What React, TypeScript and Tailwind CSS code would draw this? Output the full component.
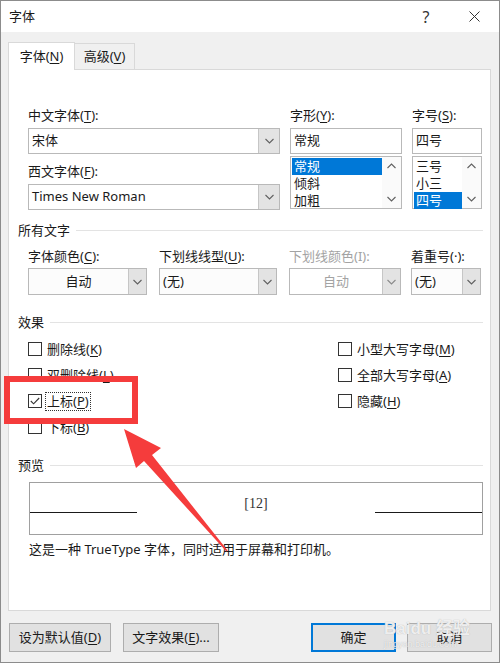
import React from 'react';

// Windows Word "字体" dialog with a red annotation around 上标(P)

const Acc = ({ c }: { c: string }) => <span className="underline underline-offset-[2px]">{c}</span>;

function Chevron({ up = false, color = '#606060' }: { up?: boolean; color?: string }) {
  return (
    <svg width="9" height="6" viewBox="0 0 9 6">
      <polyline
        points={up ? '0.5,5 4.5,1 8.5,5' : '0.5,1 4.5,5 8.5,1'}
        fill="none"
        stroke={color}
        strokeWidth="1.1"
      />
    </svg>
  );
}

function ComboEdit({ value, width }: { value: string; width: string }) {
  return (
    <div className={`${width} h-[26px] flex border border-[#b9b9b9] bg-white`}>
      <div className="flex-1 flex items-center pl-[3px] text-[13px] text-[#1a1a1a]">{value}</div>
      <div className="w-[21px] bg-[#e3e3e3] border-l border-[#c6c6c6] flex items-center justify-center">
        <Chevron />
      </div>
    </div>
  );
}

function DropList({
  value,
  width,
  center = false,
  disabled = false,
}: {
  value: string;
  width: string;
  center?: boolean;
  disabled?: boolean;
}) {
  return (
    <div className={`${width} h-[27px] flex border border-[#b9b9b9] ${disabled ? 'bg-white' : 'bg-[#fcfcfc]'}`}>
      <div
        className={`flex-1 flex items-center text-[13px] ${center ? 'justify-center' : 'pl-[3px]'} ${
          disabled ? 'text-[#a3a3a3]' : 'text-[#1a1a1a]'
        }`}
      >
        {value}
      </div>
      <div className="w-[18px] bg-[#e3e3e3] border-l border-[#c6c6c6] flex items-center justify-center">
        <Chevron color={disabled ? '#8a8a8a' : '#606060'} />
      </div>
    </div>
  );
}

function ListBox({ items, selected, width }: { items: string[]; selected: number; width: string }) {
  return (
    <div className={`${width} h-[53px] flex border border-[#b9b9b9] bg-white`}>
      <div className="flex-1 flex flex-col pt-[1px] pl-[1px]">
        {items.map((it, i) => (
          <div
            key={it}
            className={`h-[17px] flex items-center pl-[2px] text-[13px] ${
              i === selected ? 'bg-[#0078d7] text-white' : 'text-[#1a1a1a]'
            }`}
          >
            {it}
          </div>
        ))}
      </div>
      <div className="w-[19px] flex flex-col items-center justify-between py-[6px] bg-[#fafafa]">
        <Chevron up />
        <Chevron />
      </div>
    </div>
  );
}

function SectionHead({ title }: { title: string }) {
  return (
    <div className="flex items-center h-[16px] gap-[6px] pr-[7px]">
      <span className="text-[13px] text-[#1a1a1a] leading-none">{title}</span>
      <div className="flex-1 h-px bg-[#e3e3e3]" />
    </div>
  );
}

function Check({ label, checked = false, focus = false }: { label: React.ReactNode; checked?: boolean; focus?: boolean }) {
  return (
    <div className="h-[26px] flex items-center gap-[4px]">
      <div className="w-[14px] h-[14px] border border-[#333333] bg-white flex items-center justify-center">
        {checked && (
          <svg width="10" height="8" viewBox="0 0 10 8">
            <polyline points="0.8,4 3.6,6.8 9.2,1" fill="none" stroke="#333333" strokeWidth="1.1" />
          </svg>
        )}
      </div>
      <span
        className={`text-[13px] text-[#1a1a1a] leading-[17px] px-[1px] ${
          focus ? 'outline outline-1 outline-dotted outline-[#333333]' : ''
        }`}
      >
        {label}
      </span>
    </div>
  );
}

function Btn({ children, width, primary = false }: { children: React.ReactNode; width: string; primary?: boolean }) {
  return (
    <div
      className={`${width} h-[29px] flex items-center justify-center text-[13px] text-[#1a1a1a] bg-[#e1e1e1] ${
        primary ? 'border-2 border-[#0078d7]' : 'border border-[#adadad]'
      }`}
    >
      {children}
    </div>
  );
}

export default function App() {
  return (
    <div className="w-[500px] h-[663px] relative overflow-hidden bg-[#f0f0f0] border border-[#8c8c8c] font-['Noto_Sans','Noto_Sans_CJK_SC',sans-serif] text-[#1a1a1a]">
      {/* Title bar */}
      <div className="h-[31px] bg-white flex items-center justify-between pl-[8px]">
        <span className="text-[13px]">字体</span>
        <div className="flex items-center">
          <span className="w-[46px] text-center text-[16px] text-[#333333]">?</span>
          <div className="w-[50px] flex justify-center">
            <svg width="11" height="11" viewBox="0 0 11 11">
              <path d="M0.5 0.5 L10.5 10.5 M10.5 0.5 L0.5 10.5" stroke="#333333" strokeWidth="1" />
            </svg>
          </div>
        </div>
      </div>

      {/* Tabs */}
      <div className="pt-[9px] px-[7px]">
        <div className="flex items-end h-[28px]">
          <div className="w-[67px] h-[28px] bg-white border border-[#d9d9d9] border-b-0 flex items-center justify-center text-[13px] relative z-10 -mb-px">
            字体(<Acc c="N" />)
          </div>
          <div className="w-[60px] h-[26px] border border-[#d9d9d9] border-l-0 border-b-0 flex items-center justify-center text-[13px]">
            高级(<Acc c="V" />)
          </div>
        </div>

        {/* Panel */}
        <div className="w-[483px] h-[542px] bg-white border border-[#d9d9d9] pl-[9px] pt-[38px]">
          {/* Font pickers */}
          <div className="flex pl-[10px] gap-[10px]">
            <div className="w-[252px] flex flex-col">
              <div className="h-[16px] flex items-center text-[13px]">
                中文字体(<Acc c="T" />):
              </div>
              <div className="mt-[4px]">
                <ComboEdit value="宋体" width="w-[252px]" />
              </div>
              <div className="h-[16px] mt-[10px] flex items-center text-[13px]">
                西文字体(<Acc c="F" />):
              </div>
              <div className="mt-[4px]">
                <ComboEdit value="Times New Roman" width="w-[252px]" />
              </div>
            </div>
            <div className="w-[112px] flex flex-col">
              <div className="h-[16px] flex items-center text-[13px]">
                字形(<Acc c="Y" />):
              </div>
              <div className="mt-[4px] h-[26px] border border-[#b9b9b9] flex items-center pl-[3px] text-[13px]">常规</div>
              <div className="mt-[2px]">
                <ListBox items={['常规', '倾斜', '加粗']} selected={0} width="w-[112px]" />
              </div>
            </div>
            <div className="w-[70px] flex flex-col">
              <div className="h-[16px] flex items-center text-[13px]">
                字号(<Acc c="S" />):
              </div>
              <div className="mt-[4px] h-[26px] border border-[#b9b9b9] flex items-center pl-[3px] text-[13px]">四号</div>
              <div className="mt-[2px]">
                <ListBox items={['三号', '小三', '四号']} selected={2} width="w-[70px]" />
              </div>
            </div>
          </div>

          {/* 所有文字 */}
          <div className="mt-[12px]">
            <SectionHead title="所有文字" />
          </div>
          <div className="flex pl-[10px] mt-[11px] gap-[12px]">
            <div className="w-[119px]">
              <div className="h-[16px] flex items-center text-[13px]">
                字体颜色(<Acc c="C" />):
              </div>
              <div className="mt-[3px]">
                <DropList value="自动" width="w-[119px]" center />
              </div>
            </div>
            <div className="w-[118px]">
              <div className="h-[16px] flex items-center text-[13px]">
                下划线线型(<Acc c="U" />):
              </div>
              <div className="mt-[3px]">
                <DropList value="(无)" width="w-[118px]" />
              </div>
            </div>
            <div className="w-[112px]">
              <div className="h-[16px] flex items-center text-[13px] text-[#a3a3a3]">下划线颜色(I):</div>
              <div className="mt-[3px]">
                <DropList value="自动" width="w-[112px]" center disabled />
              </div>
            </div>
            <div className="w-[70px] -ml-[2px]">
              <div className="h-[16px] flex items-center text-[13px]">着重号(·):</div>
              <div className="mt-[3px]">
                <DropList value="(无)" width="w-[70px]" />
              </div>
            </div>
          </div>

          {/* 效果 */}
          <div className="mt-[19px]">
            <SectionHead title="效果" />
          </div>
          <div className="flex pl-[10px] mt-[6px]">
            <div className="w-[310px] flex flex-col">
              <Check label={<>删除线(<Acc c="K" />)</>} />
              <Check label={<>双删除线(<Acc c="L" />)</>} />
              <Check label={<>上标(<Acc c="P" />)</>} checked focus />
              <Check label={<>下标(<Acc c="B" />)</>} />
            </div>
            <div className="flex flex-col">
              <Check label={<>小型大写字母(<Acc c="M" />)</>} />
              <Check label={<>全部大写字母(<Acc c="A" />)</>} />
              <Check label={<>隐藏(<Acc c="H" />)</>} />
            </div>
          </div>

          {/* 预览 */}
          <div className="mt-[17px]">
            <SectionHead title="预览" />
          </div>
          <div className="ml-[11px] mt-[9px] w-[454px] h-[53px] border border-[#a0a0a0] flex items-center">
            <div className="flex-1 self-stretch flex flex-col justify-end pb-[21px]">
              <div className="w-[107px] h-px bg-[#1a1a1a]" />
            </div>
            <div className="text-[14px] font-['Liberation_Serif',serif] text-[#333333] -mt-[11px]">[12]</div>
            <div className="flex-1 self-stretch flex flex-col justify-end items-end pb-[21px]">
              <div className="w-[107px] h-px bg-[#1a1a1a]" />
            </div>
          </div>
          <div className="ml-[11px] mt-[6px] text-[13px] leading-[16px]">这是一种 TrueType 字体，同时适用于屏幕和打印机。</div>
        </div>

        {/* Buttons */}
        <div className="flex items-center mt-[12px] pl-[1px]">
          <Btn width="w-[102px]">
            设为默认值(<Acc c="D" />)
          </Btn>
          <div className="ml-[12px]">
            <Btn width="w-[96px]">
              文字效果(<Acc c="E" />)...
            </Btn>
          </div>
          <div className="ml-[92px]">
            <Btn width="w-[85px]" primary>
              确定
            </Btn>
          </div>
          <div className="ml-[11px]">
            <Btn width="w-[85px]">取消</Btn>
          </div>
        </div>
      </div>

      {/* Annotation: red box */}
      <div className="absolute left-[3px] top-[375px] w-[134px] h-[48px] border-[6px] border-[#f53c3c]" />

      {/* Annotation: red arrow */}
      <svg className="absolute left-0 top-0 pointer-events-none" width="500" height="663" viewBox="0 0 500 663">
        <polygon
          points="123,428 160,447 151,454 226.6,549.6 225.4,550.4 143,460 135,467"
          fill="#f53c3c"
        />
      </svg>

      {/* Baidu watermark */}
      <div className="absolute left-[383px] top-[619px] flex flex-col items-start pointer-events-none">
        <div className="text-[17px] font-bold leading-none text-white/80 [text-shadow:0_0_1px_#a5a5a5] font-['Liberation_Sans','Noto_Sans_CJK_SC',sans-serif]">
          Baidu 经验
        </div>
        <div className="text-[9px] leading-none mt-[3px] text-white/80 [text-shadow:0_0_1px_#a5a5a5] font-['Liberation_Sans',sans-serif]">
          jingyan.baidu.com
        </div>
      </div>
    </div>
  );
}
